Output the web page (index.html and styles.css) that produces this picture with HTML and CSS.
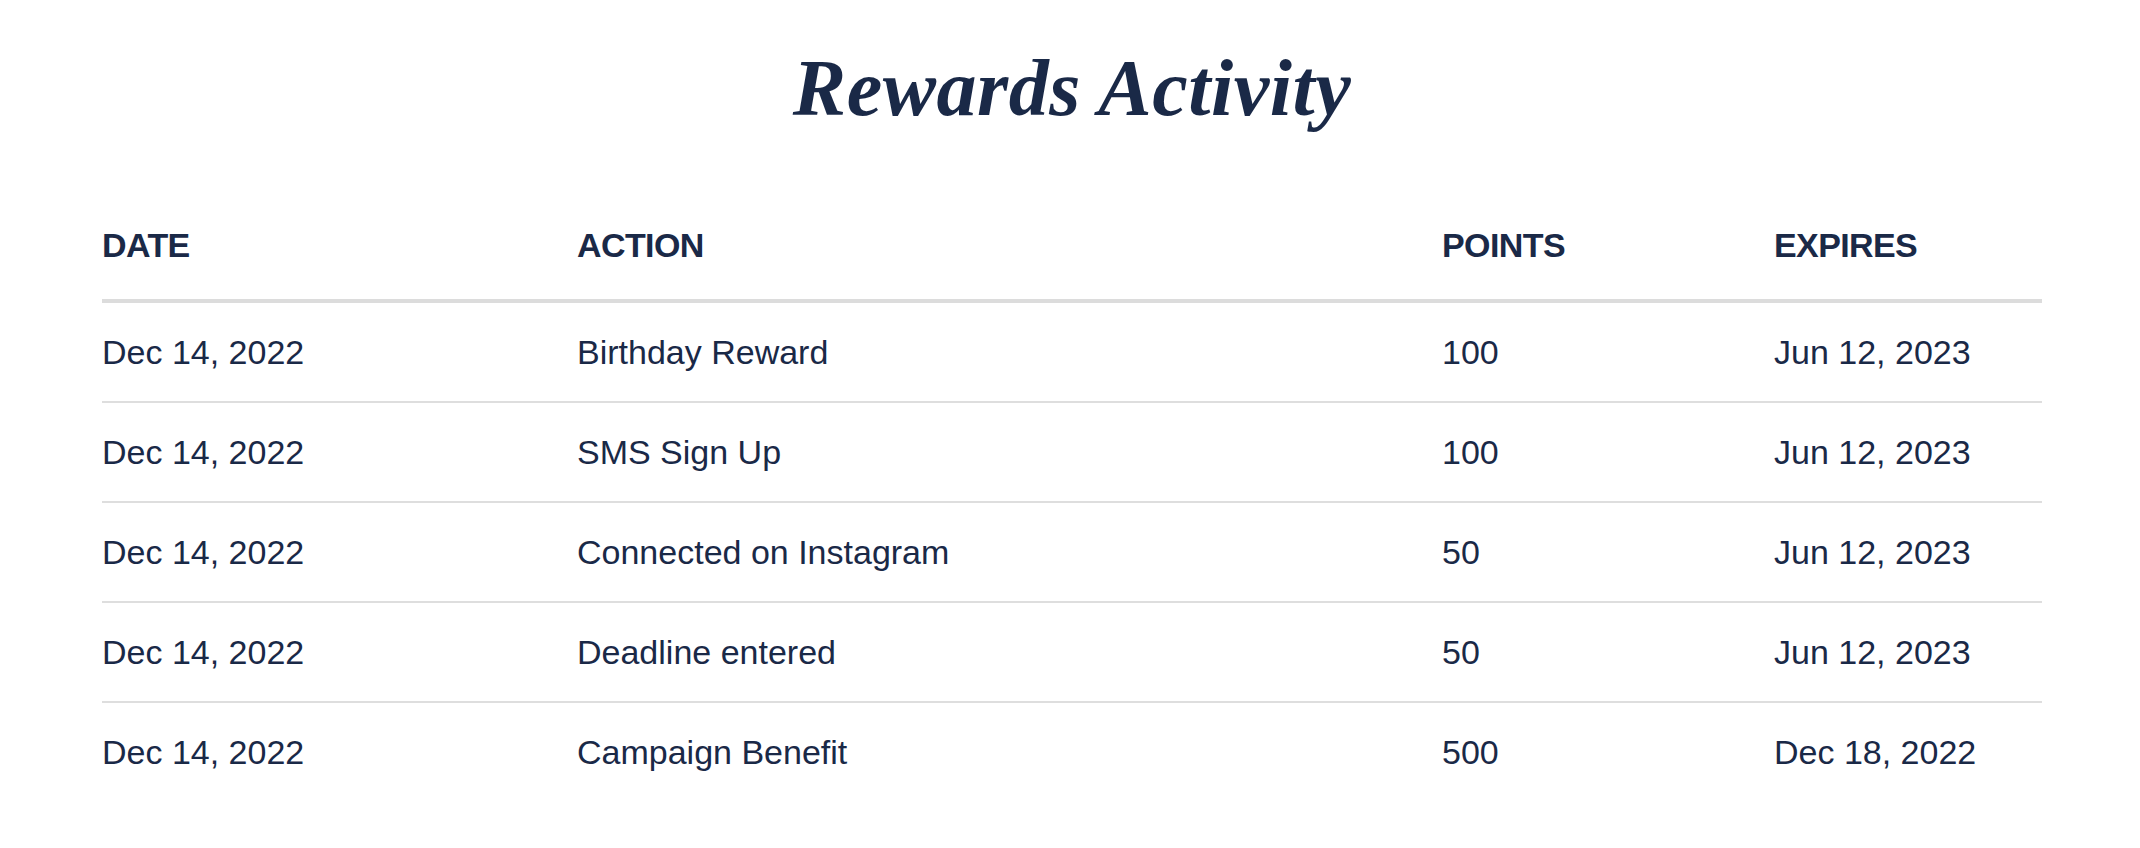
FILE: index.html
```html
<!DOCTYPE html>
<html lang="en">
<head>
<meta charset="utf-8">
<title>Rewards Activity</title>
<link rel="stylesheet" href="styles.css">
</head>
<body>
<main class="page">
  <h1 class="title">Rewards Activity</h1>
  <div class="table">
    <div class="row head">
      <div class="cell">DATE</div>
      <div class="cell">ACTION</div>
      <div class="cell">POINTS</div>
      <div class="cell">EXPIRES</div>
    </div>
    <div class="row">
      <div class="cell">Dec 14, 2022</div>
      <div class="cell">Birthday Reward</div>
      <div class="cell">100</div>
      <div class="cell">Jun 12, 2023</div>
    </div>
    <div class="row">
      <div class="cell">Dec 14, 2022</div>
      <div class="cell">SMS Sign Up</div>
      <div class="cell">100</div>
      <div class="cell">Jun 12, 2023</div>
    </div>
    <div class="row">
      <div class="cell">Dec 14, 2022</div>
      <div class="cell">Connected on Instagram</div>
      <div class="cell">50</div>
      <div class="cell">Jun 12, 2023</div>
    </div>
    <div class="row">
      <div class="cell">Dec 14, 2022</div>
      <div class="cell">Deadline entered</div>
      <div class="cell">50</div>
      <div class="cell">Jun 12, 2023</div>
    </div>
    <div class="row last">
      <div class="cell">Dec 14, 2022</div>
      <div class="cell">Campaign Benefit</div>
      <div class="cell">500</div>
      <div class="cell">Dec 18, 2022</div>
    </div>
  </div>
</main>
</body>
</html>
```

FILE: styles.css
```css
html, body {
  margin: 0;
  padding: 0;
  background: #ffffff;
}

body {
  color: #1a2947;
  font-family: "Liberation Sans", Arial, sans-serif;
}

.page {
  width: 1940px;
  margin-left: 102px;
  padding-top: 48px;
}

.title {
  margin: 0;
  font-family: "Liberation Serif", "Times New Roman", serif;
  font-style: italic;
  font-weight: 700;
  font-size: 80px;
  line-height: 80px;
  letter-spacing: 0.5px;
  text-align: center;
  color: #1a2947;
}

.table {
  margin-top: 97px;
}

.row {
  display: grid;
  grid-template-columns: 475px 865px 332px 268px;
  align-items: center;
  height: 98px;
  border-bottom: 2px solid #dedede;
}

.row.last {
  border-bottom: none;
}

.row.head {
  height: auto;
  align-items: start;
  padding-bottom: 34px;
  border-bottom: 4px solid #dcdcdc;
}

.cell {
  font-size: 34px;
  line-height: 40px;
  white-space: nowrap;
}

.head .cell {
  font-weight: 700;
  letter-spacing: -0.6px;
}
```
